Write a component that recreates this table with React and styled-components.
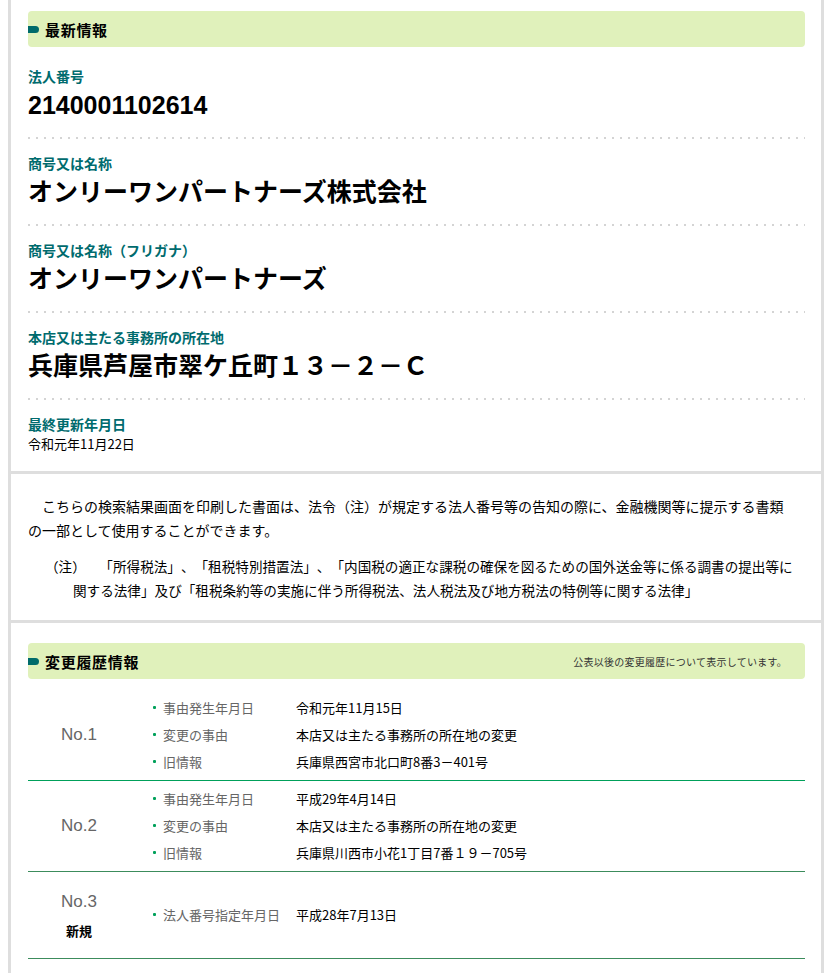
import React from 'react';
import styled, { createGlobalStyle } from 'styled-components';

const GlobalStyle = createGlobalStyle`
  html, body { margin: 0; padding: 0; background: #fff; }
  body {
    font-family: "Noto Sans CJK JP", "Noto Sans", sans-serif;
    color: #000;
  }
`;

const Frame = styled.div`
  box-sizing: border-box;
  width: 816px;
  margin-left: 8px;
  min-height: 100vh;
  border-left: 3px solid #dedede;
  border-right: 3px solid #dedede;
`;

const Section = styled.section`
  padding: ${p => p.$pad};
  & + & { border-top: 3px solid #dedede; }
`;

const SectionHead = styled.div`
  display: flex;
  align-items: center;
  justify-content: space-between;
  height: 36px;
  padding-right: 18px;
  background: #e0f1bb;
  border-radius: 4px;
`;

const HeadTitle = styled.h2`
  margin: 0;
  display: flex;
  align-items: center;
  gap: 6px;
  font-size: 15px;
  font-weight: bold;
  letter-spacing: 0.7px;
  color: #000;
  &::before {
    content: "";
    flex: none;
    width: 11px;
    height: 7px;
    background: #006b6b;
    border-radius: 0 4px 4px 0;
  }
`;

const HeadNote = styled.span`
  font-size: 10px;
  letter-spacing: 0.25px;
  color: #333;
`;

const Field = styled.div`
  padding: ${p => (p.$first ? '19px' : '14px')} 0 18px;
  background: ${p =>
    p.$last
      ? 'none'
      : 'linear-gradient(to right, #d4d4d4 2px, transparent 2px) left bottom / 8px 2px repeat-x'};
`;

const FieldLabel = styled.div`
  font-size: 14px;
  font-weight: bold;
  line-height: 20px;
  color: #006b6e;
`;

const BigValue = styled.div`
  margin-top: 3px;
  font-family: "Liberation Sans", "Noto Sans CJK JP", sans-serif;
  font-size: 25px;
  font-weight: bold;
  line-height: 32px;
  color: #000;
`;

const SmallValue = styled.div`
  margin-top: 1px;
  font-size: 13px;
  line-height: 18px;
  color: #000;
`;

const Para = styled.p`
  margin: 0;
  font-size: 14px;
  line-height: 24px;
  text-indent: 1em;
  color: #000;
`;

const Note = styled.p`
  margin: 12px 0 0 17px;
  padding-left: 28px;
  text-indent: -28px;
  font-size: 13.6px;
  line-height: 24px;
  text-spacing-trim: space-all;
  color: #000;
`;

const HistoryList = styled.div`
  margin-top: 11px;
`;

const Row = styled.div`
  display: grid;
  grid-template-columns: 102px 1fr;
  align-items: center;
  padding: 4px 0 5px;
  border-bottom: 1px solid #3c8c5c;
  &:first-child { border-bottom-color: #00a05a; }
`;

const NoCell = styled.div`
  display: flex;
  flex-direction: column;
  align-items: center;
  padding: ${p => (p.$tall ? '12px 0' : '0')};
`;

const NoLabel = styled.div`
  font-family: "Liberation Sans", Arial, sans-serif;
  font-size: 17px;
  line-height: 27px;
  color: #666;
`;

const NewTag = styled.div`
  margin-top: 6px;
  font-size: 13px;
  font-weight: bold;
  line-height: 20px;
  color: #000;
`;

const Items = styled.ul`
  margin: 0;
  padding: 0 0 0 20px;
  list-style: none;
`;

const Item = styled.li`
  display: flex;
  align-items: center;
  font-size: 13px;
  line-height: 27px;
  &::before {
    content: "";
    flex: none;
    width: 3px;
    height: 3px;
    margin: 0 7px 0 3px;
    border-radius: 1px;
    background: #00a05a;
  }
`;

const ItemLabel = styled.span`
  flex: none;
  width: 133px;
  color: #666;
`;

const ItemValue = styled.span`
  color: #000;
`;

const fields = [
  { label: '法人番号', value: '2140001102614' },
  { label: '商号又は名称', value: 'オンリーワンパートナーズ株式会社' },
  { label: '商号又は名称（フリガナ）', value: 'オンリーワンパートナーズ' },
  { label: '本店又は主たる事務所の所在地', value: '兵庫県芦屋市翠ケ丘町１３－２－Ｃ' },
];

const history = [
  {
    no: 'No.1',
    items: [
      ['事由発生年月日', '令和元年11月15日'],
      ['変更の事由', '本店又は主たる事務所の所在地の変更'],
      ['旧情報', '兵庫県西宮市北口町8番3－401号'],
    ],
  },
  {
    no: 'No.2',
    items: [
      ['事由発生年月日', '平成29年4月14日'],
      ['変更の事由', '本店又は主たる事務所の所在地の変更'],
      ['旧情報', '兵庫県川西市小花1丁目7番１９－705号'],
    ],
  },
  {
    no: 'No.3',
    isNew: true,
    items: [['法人番号指定年月日', '平成28年7月13日']],
  },
];

export default function App() {
  return (
    <>
      <GlobalStyle />
      <Frame>
        <Section $pad="11px 16px 0 17px">
          <SectionHead>
            <HeadTitle>最新情報</HeadTitle>
          </SectionHead>
          {fields.map((f, i) => (
            <Field key={f.label} $first={i === 0}>
              <FieldLabel>{f.label}</FieldLabel>
              <BigValue>{f.value}</BigValue>
            </Field>
          ))}
          <Field $last>
            <FieldLabel>最終更新年月日</FieldLabel>
            <SmallValue>令和元年11月22日</SmallValue>
          </Field>
        </Section>

        <Section $pad="20px 16px 18px 17px">
          <Para>
            こちらの検索結果画面を印刷した書面は、法令（注）が規定する法人番号等の告知の際に、金融機関等に提示する書類
            <br />
            の一部として使用することができます。
          </Para>
          <Note>
            （注）　「所得税法」、「租税特別措置法」、「内国税の適正な課税の確保を図るための国外送金等に係る調書の提出等に
            <br />
            関する法律」及び「租税条約等の実施に伴う所得税法、法人税法及び地方税法の特例等に関する法律」
          </Note>
        </Section>

        <Section $pad="20px 16px 20px 17px">
          <SectionHead>
            <HeadTitle>変更履歴情報</HeadTitle>
            <HeadNote>公表以後の変更履歴について表示しています。</HeadNote>
          </SectionHead>
          <HistoryList>
            {history.map(h => (
              <Row key={h.no}>
                <NoCell $tall={h.isNew}>
                  <NoLabel>{h.no}</NoLabel>
                  {h.isNew && <NewTag>新規</NewTag>}
                </NoCell>
                <Items>
                  {h.items.map(([l, v]) => (
                    <Item key={l}>
                      <ItemLabel>{l}</ItemLabel>
                      <ItemValue>{v}</ItemValue>
                    </Item>
                  ))}
                </Items>
              </Row>
            ))}
          </HistoryList>
        </Section>
      </Frame>
    </>
  );
}
